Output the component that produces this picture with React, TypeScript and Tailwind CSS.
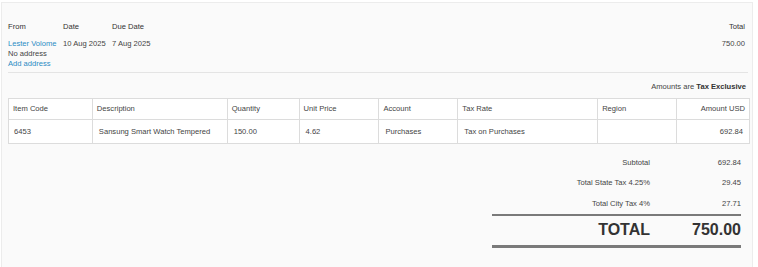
const lines = [
  {
    code: "6453",
    description: "Sansung Smart Watch Tempered",
    quantity: "150.00",
    unitPrice: "4.62",
    account: "Purchases",
    taxRate: "Tax on Purchases",
    region: "",
    amount: "692.84",
  },
];

const columns = [
  { key: "code", title: "Item Code", width: "w-[84px]" },
  { key: "description", title: "Description", width: "w-[135px]" },
  { key: "quantity", title: "Quantity", width: "w-[72px]" },
  { key: "unitPrice", title: "Unit Price", width: "w-[80px]" },
  { key: "account", title: "Account", width: "w-[79px]" },
  { key: "taxRate", title: "Tax Rate", width: "w-[140px]" },
  { key: "region", title: "Region", width: "w-[79px]" },
  { key: "amount", title: "Amount USD", width: "w-[73px]" },
] as const;

const summary = [
  { label: "Subtotal", value: "692.84" },
  { label: "Total State Tax 4.25%", value: "29.45" },
  { label: "Total City Tax 4%", value: "27.71" },
];

const App = () => {
  return (
    <div className="w-[758px] h-[267px] bg-white overflow-hidden font-['Liberation_Sans',Arial,sans-serif] text-[7.6px] text-[#333]">
      <div className="ml-[1px] mt-[2px] w-[752px] h-[270px] bg-[#fafafa] border-t border-l border-r border-[#ececec] pl-[6px] pr-[2px] pt-[19px]">
        {/* Header */}
        <div className="flex justify-between pr-[5px]">
          <div className="flex">
            <div className="w-[55px]">
              <div className="h-[10px] leading-[10px]">From</div>
              <div className="h-[7px]" />
              <div className="leading-[10px] text-[#2b8cc4]">Lester Volome</div>
              <div className="leading-[10px] text-[#444]">No address</div>
              <div className="leading-[10px] text-[#2b8cc4]">Add address</div>
            </div>
            <div className="w-[49px]">
              <div className="h-[10px] leading-[10px]">Date</div>
              <div className="h-[7px]" />
              <div className="leading-[10px] text-[#444]">10 Aug 2025</div>
            </div>
            <div>
              <div className="h-[10px] leading-[10px]">Due Date</div>
              <div className="h-[7px]" />
              <div className="leading-[10px] text-[#444]">7 Aug 2025</div>
            </div>
          </div>
          <div className="text-right">
            <div className="h-[10px] leading-[10px]">Total</div>
            <div className="h-[7px]" />
            <div className="leading-[10px] text-[#444]">750.00</div>
          </div>
        </div>

        <div className="mt-[3px] mr-[2px] border-t border-[#e4e4e4]" />

        <div className="mt-[9px] pr-[4px] text-right leading-[10px] text-[#444]">
          Amounts are <span className="font-bold text-[#333]">Tax Exclusive</span>
        </div>

        {/* Line items */}
        <table className="mt-[6px] border-collapse bg-white text-[#444]">
          <thead>
            <tr className="h-[21px]">
              {columns.map((col) => (
                <th
                  key={col.key}
                  className={`${col.width} border border-[#dcdcdc] px-[4px] font-normal ${
                    col.key === "amount" ? "text-right" : "text-left"
                  }`}
                >
                  {col.title}
                </th>
              ))}
            </tr>
          </thead>
          <tbody>
            {lines.map((line, index) => (
              <tr key={index} className="h-[24px]">
                {columns.map((col) => (
                  <td
                    key={col.key}
                    className={`border border-[#dcdcdc] ${
                      col.key === "code" ? "px-[5px]" : "px-[6px]"
                    } ${col.key === "amount" ? "text-right" : "text-left"}`}
                  >
                    {line[col.key]}
                  </td>
                ))}
              </tr>
            ))}
          </tbody>
        </table>

        {/* Totals */}
        <div className="flex justify-end pr-[9px] mt-[8px]">
          <div className="w-[249px] text-[#444]">
            {summary.map((row) => (
              <div key={row.label} className="flex h-[20.5px] items-center">
                <div className="w-[158px] text-right">{row.label}</div>
                <div className="flex-1 text-right">{row.value}</div>
              </div>
            ))}
            <div className="border-t-2 border-[#7a7a7a]" />
            <div className="flex h-[29px] pb-[1px] items-center font-bold text-[16px] text-[#333]">
              <div className="w-[158px] text-right">TOTAL</div>
              <div className="flex-1 text-right">750.00</div>
            </div>
            <div className="border-t-[3px] border-[#7a7a7a]" />
          </div>
        </div>
      </div>
    </div>
  );
};

export default App;
